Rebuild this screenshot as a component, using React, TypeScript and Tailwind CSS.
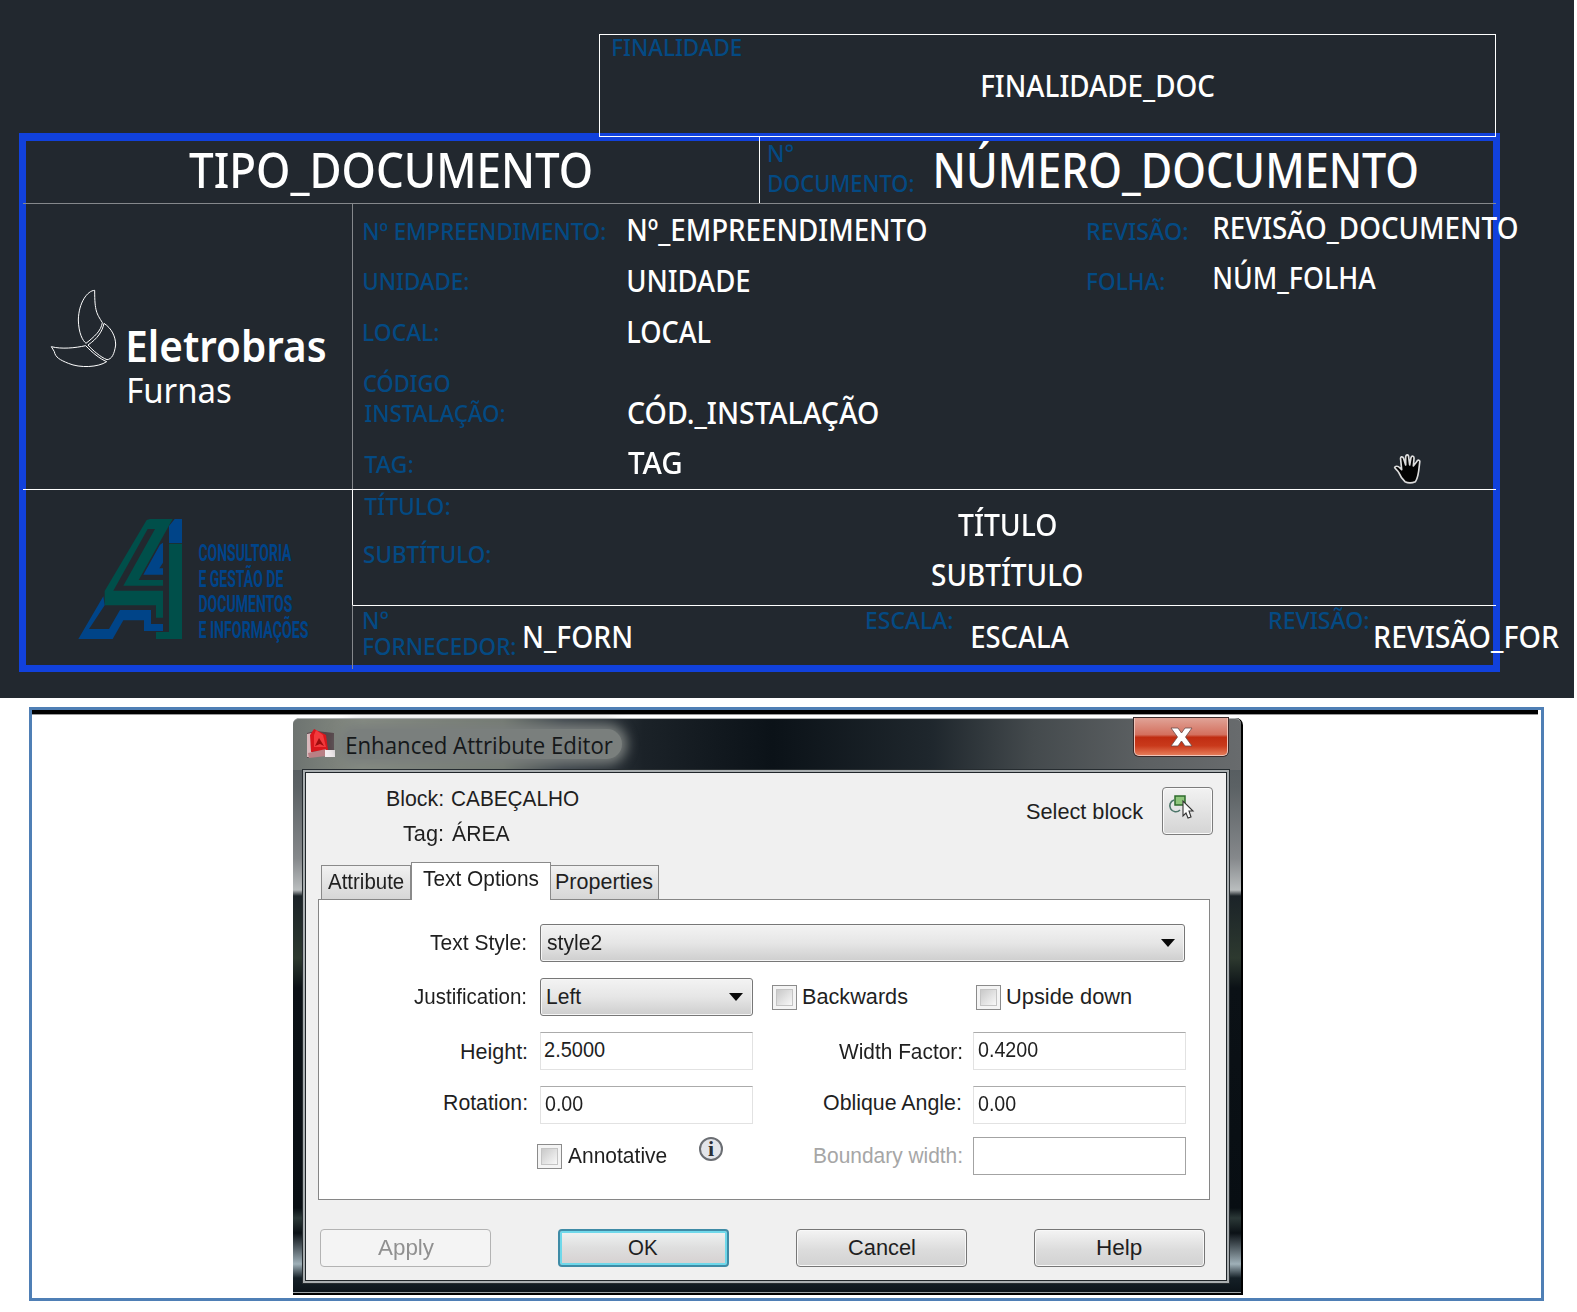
import { useLayoutEffect, useRef, type ReactNode } from "react";

/* Text stretched horizontally so that its ink fills the width of its box. */
function Fit({ children, className }: { children: string; className: string }) {
  const box = useRef<HTMLSpanElement>(null);
  const ink = useRef<HTMLSpanElement>(null);

  useLayoutEffect(() => {
    const b = box.current;
    const t = ink.current;
    if (!b || !t) return;
    const apply = () => {
      const cs = getComputedStyle(t);
      const ctx = document.createElement("canvas").getContext("2d");
      if (!ctx) return;
      ctx.font = `${cs.fontWeight} ${cs.fontSize} ${cs.fontFamily}`;
      const m = ctx.measureText(children);
      const width = m.actualBoundingBoxLeft + m.actualBoundingBoxRight;
      if (!width) return;
      const scale = b.clientWidth / width;
      t.style.transform = `translateX(${m.actualBoundingBoxLeft * scale}px) scaleX(${scale})`;
    };
    apply();
    document.fonts?.ready.then(apply);
  }, [children]);

  return (
    <span ref={box} className={`block shrink-0 whitespace-nowrap ${className}`}>
      <span ref={ink} className="inline-block origin-left align-top">
        {children}
      </span>
    </span>
  );
}

function Label({ children, className }: { children: string; className: string }) {
  return <Fit className={`h-[17px] text-[24px] leading-[17px] font-medium text-[#044a83] ${className}`}>{children}</Fit>;
}

function Value({ children, className }: { children: string; className: string }) {
  return <Fit className={`h-[22px] text-[30px] leading-[22px] font-medium text-white ${className}`}>{children}</Fit>;
}

function EletrobrasMark() {
  return (
    <svg className="h-[80px] w-[68px] shrink-0" viewBox="150 57 204 240" fill="none" stroke="#fff" strokeWidth="3">
      <path d="M284 61C262 62 236 98 235 150C236 190 248 212 258 220C283 200 303 183 307 158C290 130 284 125 284 61Z" />
      <path d="M312 160C335 175 347 200 347 225C343 253 335 268 321 269C302 262 277 240 264 225C292 206 307 185 312 160Z" />
      <path d="M154 230C185 238 225 234 257 227C277 248 299 266 320 275C295 292 240 295 205 280C180 270 166 262 163 245Z" />
    </svg>
  );
}

function ConsultoriaMark() {
  return (
    <svg className="h-[122px] w-[105px] shrink-0" viewBox="114 54 315 366">
      <g fill="#004f4a">
        <path d="M320 60L330 57H398L296 240H369V257H250L345 87H323L220 272H369V353H348V316H194V273Z" />
        <path d="M387 131H426V417H348V396H387Z" />
      </g>
      <g fill="#004488">
        <path d="M387 129V78L404 57H426V129Z" />
        <path d="M369 128V188L358 205H369V224H310L360 134Z" />
        <path d="M190 289L194 316L147 387H207L240 330H333V372H369V393H312V361H250L218 417H115Z" />
      </g>
    </svg>
  );
}

function HandCursor() {
  return (
    <svg className="absolute top-[453px] left-[1393px] h-[32px] w-[30px]" viewBox="24 24 90 96">
      <path
        d="M60 110C52 102 45 92 41 82C37 75 31 72 29 68C30 62 40 63 44 68L50 74L47 44C45 34 53 33 56 41L62 60V36C63 27 71 28 71 37L74 60L78 38C81 30 88 33 87 41L85 63L95 50C99 42 106 45 104 53L101 78C99 92 97 102 91 110C82 114 68 114 60 110Z"
        fill="#020202"
        stroke="#dcdcdc"
        strokeWidth="5"
        strokeLinejoin="round"
      />
    </svg>
  );
}

function TitleBlock() {
  return (
    <div className="relative -mt-[4px] ml-[19px] h-[539px] w-[1481px]">
      <div className="absolute inset-0 border-[7px] border-t-8 border-[#1141dc]" />
      <div className="relative flex w-[1477px] flex-col pt-1 pl-1">
        <div className="flex h-[66px] w-full">
          <div className="w-[736px] shrink-0 pt-[15px] pl-[166px]">
            <Fit className="h-[35px] w-[402px] text-[49px] leading-[35px] font-medium text-white">TIPO_DOCUMENTO</Fit>
          </div>
          <div className="flex flex-1 border-l border-white pl-[9px]">
            <div className="flex w-[167px] shrink-0 flex-col gap-[13px] pt-[7px]">
              <Label className="w-[25px]">N°</Label>
              <Label className="w-[144px]">DOCUMENTO:</Label>
            </div>
            <Fit className="mt-[15px] h-[35px] w-[481px] text-[49px] leading-[35px] font-medium text-white">
              NÚMERO_DOCUMENTO
            </Fit>
          </div>
        </div>

        <div className="flex h-[286px] w-[1473px] border-t border-[#85888c]">
          <div className="flex w-[329px] shrink-0 pt-[85px] pl-[27px]">
            <EletrobrasMark />
            <div className="flex flex-col pt-[40px] pl-[11px]">
              <Fit className="h-[32px] w-[196px] text-[44px] leading-[32px] font-semibold text-white">Eletrobras</Fit>
              <Fit className="mt-[16px] h-[26px] w-[102px] text-[35px] leading-[26px] text-white">Furnas</Fit>
            </div>
          </div>
          <div className="flex w-[1144px] shrink-0 border-l border-[#85888c] pl-[11px]">
            <div className="flex w-[264px] shrink-0 flex-col pt-[18px]">
              <Label className="w-[241px]">Nº EMPREENDIMENTO:</Label>
              <Label className="mt-[33px] w-[104px]">UNIDADE:</Label>
              <Label className="mt-[34px] w-[74px]">LOCAL:</Label>
              <Label className="mt-[34px] w-[86px]">CÓDIGO</Label>
              <Label className="mt-[13px] w-[140px]">INSTALAÇÃO:</Label>
              <Label className="mt-[34px] w-[48px]">TAG:</Label>
            </div>
            <div className="flex w-[460px] shrink-0 flex-col pt-[15px]">
              <Value className="w-[298px]">Nº_EMPREENDIMENTO</Value>
              <Value className="mt-[29px] w-[121px]">UNIDADE</Value>
              <Value className="mt-[29px] w-[83px]">LOCAL</Value>
              <Value className="mt-[59px] w-[250px]">CÓD._INSTALAÇÃO</Value>
              <Value className="mt-[28px] w-[53px]">TAG</Value>
            </div>
            <div className="flex w-[126px] shrink-0 flex-col pt-[18px]">
              <Label className="w-[99px]">REVISÃO:</Label>
              <Label className="mt-[33px] w-[76px]">FOLHA:</Label>
            </div>
            <div className="flex flex-col pt-[13px]">
              <Value className="w-[303px]">REVISÃO_DOCUMENTO</Value>
              <Value className="mt-[28px] w-[162px]">NÚM_FOLHA</Value>
            </div>
          </div>
        </div>

        <div className="flex h-[180px] w-[1473px] border-t border-white">
          <div className="flex w-[329px] shrink-0 pt-[28px] pl-[55px]">
            <ConsultoriaMark />
            <div className="flex flex-col gap-[8px] pt-[26px] pl-[16px] font-['Roboto'] text-[#00448a]">
              <Fit className="h-[18px] w-[93px] text-[24px] leading-[18px] font-bold">CONSULTORIA</Fit>
              <Fit className="h-[18px] w-[84px] text-[24px] leading-[18px] font-bold">E GESTÃO DE</Fit>
              <Fit className="h-[17px] w-[93px] text-[24px] leading-[17px] font-bold">DOCUMENTOS</Fit>
              <Fit className="h-[18px] w-[109px] text-[24px] leading-[18px] font-bold">E INFORMAÇÕES</Fit>
            </div>
          </div>
          <div className="flex w-[1144px] shrink-0 flex-col">
            <div className="flex h-[115px] border-l border-white pl-[11px]">
              <div className="flex w-[568px] shrink-0 flex-col gap-[31px] pt-[7px]">
                <Label className="w-[85px]">TÍTULO:</Label>
                <Label className="w-[126px]">SUBTÍTULO:</Label>
              </div>
              <div className="flex w-[150px] flex-col items-center gap-[28px] pt-[24px]">
                <Value className="w-[98px]">TÍTULO</Value>
                <Value className="w-[150px]">SUBTÍTULO</Value>
              </div>
            </div>
            <div className="flex h-[64px] border-t border-l border-t-white border-l-[#85888c] pl-[11px]">
              <div className="flex w-[160px] shrink-0 flex-col gap-[9px] pt-[5px]">
                <Label className="w-[25px]">N°</Label>
                <Label className="w-[151px]">FORNECEDOR:</Label>
              </div>
              <Value className="mt-[20px] w-[107px]">N_FORN</Value>
              <Label className="mt-[5px] ml-[236px] w-[85px]">ESCALA:</Label>
              <Value className="mt-[20px] ml-[20px] w-[97px]">ESCALA</Value>
              <Label className="mt-[5px] ml-[201px] w-[98px]">REVISÃO:</Label>
              <Value className="mt-[20px] ml-[7px] w-[184px]">REVISÃO_FOR</Value>
            </div>
          </div>
        </div>
      </div>
    </div>
  );
}

function CadSheet() {
  return (
    <section className="relative h-[698px] w-[1574px] overflow-hidden bg-[#22282f] pt-[34px] font-['Noto_Sans',sans-serif]">
      <div className="relative z-10 ml-[599px] flex h-[103px] w-[897px] border border-white pl-[12px]">
        <Label className="mt-[3px] ml-px w-[128px]">FINALIDADE</Label>
        <Value className="mt-[40px] ml-[241px] w-[233px]">FINALIDADE_DOC</Value>
      </div>
      <TitleBlock />
      <HandCursor />
    </section>
  );
}

function Ui({ children, className }: { children: string; className: string }) {
  return <Fit className={`h-[16px] text-[22px] leading-[16px] ${className}`}>{children}</Fit>;
}

function Caret() {
  return <span className="h-[8px] w-[14px] bg-[#0a0a0a] [clip-path:polygon(0_0,100%_0,50%_100%)]" />;
}

function Select({ children, className }: { children: ReactNode; className: string }) {
  return (
    <div
      className={`flex h-[38px] shrink-0 items-center justify-between rounded-[3px] border border-[#777] bg-linear-to-b from-[#f3f3f3] via-[#e6e6e6] to-[#cecece] shadow-[inset_0_0_0_1px_#f6f6f6] ${className}`}
    >
      {children}
      <Caret />
    </div>
  );
}

function Field({ children, className }: { children?: ReactNode; className: string }) {
  return <div className={`flex h-[38px] w-[213px] shrink-0 border bg-white pl-[4px] ${className}`}>{children}</div>;
}

const softField = "border-[#e2e2e2] border-t-[#ababab] pt-[9px]";

function Checkbox() {
  return (
    <span className="flex size-[25px] shrink-0 items-center justify-center border border-[#8b8b8b] bg-[#f4f4f4]">
      <span className="size-[17px] border border-[#c4c4c4] bg-linear-to-br from-[#c9c9c9] to-[#f8f8f8]" />
    </span>
  );
}

function RowLabel({ children, className }: { children: ReactNode; className: string }) {
  return <div className={`flex shrink-0 justify-end ${className}`}>{children}</div>;
}

function TextOptions() {
  return (
    <div className="flex h-[301px] w-[892px] flex-col border border-[#868686] bg-white pt-[24px]">
      <div className="flex h-[38px] items-center">
        <RowLabel className="w-[207px]"><Ui className="w-[96px]">Text Style:</Ui></RowLabel>
        <Select className="ml-[14px] w-[645px] pr-[9px] pl-[6px]"><Ui className="w-[55px]">style2</Ui></Select>
      </div>
      <div className="mt-[16px] flex h-[38px] items-center">
        <RowLabel className="w-[207px]"><Ui className="w-[112px]">Justification:</Ui></RowLabel>
        <Select className="ml-[14px] w-[213px] pr-[9px] pl-[6px]"><Ui className="w-[34px]">Left</Ui></Select>
        <div className="ml-[19px] flex w-[204px] items-center gap-[6px]">
          <Checkbox />
          <Ui className="w-[105px]">Backwards</Ui>
        </div>
        <div className="flex items-center gap-[6px]">
          <Checkbox />
          <Ui className="w-[124px]">Upside down</Ui>
        </div>
      </div>
      <div className="mt-[16px] flex h-[38px] items-center">
        <RowLabel className="w-[208px]"><Ui className="mt-[2px] w-[66px]">Height:</Ui></RowLabel>
        <Field className={`ml-[13px] ${softField}`}><Ui className="w-[60px]">2.5000</Ui></Field>
        <RowLabel className="w-[209px]"><Ui className="mt-[2px] w-[123px]">Width Factor:</Ui></RowLabel>
        <Field className={`ml-[11px] ${softField}`}><Ui className="w-[60px]">0.4200</Ui></Field>
      </div>
      <div className="mt-[16px] flex h-[38px] items-center">
        <RowLabel className="w-[208px]"><Ui className="-mt-[4px] w-[83px]">Rotation:</Ui></RowLabel>
        <Field className={`ml-[13px] ${softField}`}><Ui className="w-[38px]">0.00</Ui></Field>
        <RowLabel className="w-[209px]"><Ui className="-mt-[4px] w-[138px]">Oblique Angle:</Ui></RowLabel>
        <Field className={`ml-[11px] ${softField}`}><Ui className="w-[38px]">0.00</Ui></Field>
      </div>
      <div className="mt-[13px] flex h-[38px] items-center">
        <div className="ml-[218px] flex w-[162px] items-center gap-[6px]">
          <Checkbox />
          <Ui className="w-[99px]">Annotative</Ui>
        </div>
        <span className="-mt-[14px] flex size-[24px] items-center justify-center rounded-full border-2 border-[#6a6d72] bg-[#e3e5ea] font-['Liberation_Serif'] text-[22px] leading-none font-bold text-[#2c2f36]">
          i
        </span>
        <RowLabel className="w-[239px]"><Ui className="w-[148px] text-[#a6a6a6]">Boundary width:</Ui></RowLabel>
        <Field className="ml-[11px] border-[#a3a3a3]" />
      </div>
    </div>
  );
}

function Tab({ children, className }: { children: ReactNode; className: string }) {
  return (
    <div className={`flex h-[34px] justify-center border border-b-0 border-[#8a8a8a] bg-linear-to-b from-[#f1f1f1] to-[#d6d6d6] pt-[8px] ${className}`}>
      {children}
    </div>
  );
}

function DialogButton({ children, className }: { children: ReactNode; className: string }) {
  return <div className={`flex h-[38px] w-[171px] items-center justify-center rounded-[4px] ${className}`}>{children}</div>;
}

const plainButton =
  "border border-[#767676] bg-linear-to-b from-[#f4f4f4] from-0% via-[#dcdcdc] via-55% to-[#d2d2d2] shadow-[inset_0_0_0_1px_#f8f8f8]";

function AppIcon() {
  return (
    <svg className="h-[30px] w-[30px] shrink-0" viewBox="0 0 30 30">
      <defs>
        <filter id="soft" x="-10%" y="-10%" width="120%" height="120%">
          <feGaussianBlur stdDeviation="0.7" />
        </filter>
      </defs>
      <g filter="url(#soft)">
        <path d="M1 4L10 2L28 4V22H20L1 29Z" fill="#55454a" />
        <path d="M1 5L6 4V28H1Z" fill="#d9b9bc" />
        <path d="M4 6L8 0L20 6L22 21L5 23Z" fill="#d9161c" />
        <path d="M8 6L10 1L17 6L20 18H8Z" fill="#f23a3c" />
        <path d="M9 17L13 9L18 17L14 15Z" fill="#9d090e" />
        <path d="M2 24L20 20V27L3 29Z" fill="#b98085" />
        <path d="M19 21H29V28H19Z" fill="#f4eef0" />
      </g>
    </svg>
  );
}

function PickIcon() {
  return (
    <svg className="h-[26px] w-[28px]" viewBox="0 0 28 26">
      <path d="M7 6A6 6 0 1 0 13 16" fill="none" stroke="#4c7569" strokeWidth="1.6" />
      <path d="M8 2H18V11H8Z" fill="#8fc67c" stroke="#2e6b2c" strokeWidth="1.5" />
      <path d="M16 7V22L19 19L21 24L24 23L22 17H26Z" fill="#fafafa" stroke="#333" strokeWidth="1.1" />
    </svg>
  );
}

function AttributeDialog() {
  return (
    <div className="relative ml-[261px] flex h-[577px] w-[950px] flex-col rounded-t-[7px] border-r-2 border-b-2 border-black bg-[linear-gradient(180deg,#4b5256_0px,#5c6265_70px,#85888b_140px,#b9bdbe_172px,#1b2328_178px,#2d392f_240px,#0b1116_270px,#080e13_490px,#2b3837_500px,#0b1116_515px,#9fb0b8_546px,#152027_560px,#0a1117_577px)]">
      <div className="flex h-[52px] shrink-0 rounded-t-[6px] border-t border-[#aeb2b3] bg-[linear-gradient(90deg,#6d7370_0px,#878d83_70px,#747b72_210px,#3c444b_270px,#1b2228_350px,#0b1218_480px,#1f272d_640px,#444a4d_740px,#5c6062_850px,#686b6d_948px)] pl-[13px]">
        <div className="mt-[10px]"><AppIcon /></div>
        <div className="mt-[10px] ml-[6px] h-[30px] w-[280px] shrink-0 rounded-full bg-[#7a7f7d] pt-[7px] pl-[5px] shadow-[0_0_12px_5px_#7a7f7d]">
          <Fit className="h-[17px] w-[266px] font-['Open_Sans'] text-[24px] leading-[17px] text-[#15181a]">
            Enhanced Attribute Editor
          </Fit>
        </div>
        <div className="-mt-px ml-[512px] flex h-[38px] w-[94px] items-center justify-center rounded-b-[5px] border border-t-0 border-[#f0c3b8] bg-[linear-gradient(180deg,#e0a397_0%,#d4705e_45%,#c02d12_52%,#c9391b_75%,#e57b58_100%)] shadow-[0_0_0_1px_#3a2a2a]">
          <svg className="h-[20px] w-[23px]" viewBox="0 0 23 20">
            <path
              d="M1 1H8L11.5 6L15 1H22L15.5 10L22 19H15L11.5 14L8 19H1L7.5 10Z"
              fill="#fff"
              stroke="#6b4a48"
              strokeWidth="0.8"
            />
          </svg>
        </div>
      </div>

      <div className="ml-[10px] flex h-[513px] w-[926px] shrink-0 flex-col border-2 border-[#a9aeb0] shadow-[0_0_0_1px_#262c30]">
        <div className="flex h-full flex-col border border-[#20262a] bg-[#f0f0f0] font-['Liberation_Sans'] text-[#1f1f1f]">
          <div className="flex h-[90px] shrink-0">
            <div className="flex w-[137px] flex-col items-end gap-[19px] pt-[18px]">
              <Ui className="w-[56px]">Block:</Ui>
              <Ui className="w-[40px]">Tag:</Ui>
            </div>
            <div className="flex w-[584px] flex-col gap-[19px] pt-[18px] pl-[9px]">
              <Ui className="w-[127px]">CABEÇALHO</Ui>
              <Ui className="w-[58px]">ÁREA</Ui>
            </div>
            <Ui className="mt-[31px] w-[117px]">Select block</Ui>
            <div className="mt-[14px] ml-[18px] h-[48px] w-[51px] shrink-0 rounded-[4px] border border-[#7c7c7c] bg-linear-to-b from-[#f2f2f2] to-[#d4d4d4] pt-[6px] pl-[4px] shadow-[inset_0_0_0_1px_#fafafa]">
              <PickIcon />
            </div>
          </div>
          <div className="flex h-[36px] shrink-0 items-end pl-[15px]">
            <Tab className="w-[90px]"><Ui className="w-[76px]">Attribute</Ui></Tab>
            <div className="relative z-10 -mb-px flex h-[38px] w-[140px] justify-center border border-b-0 border-[#8a8a8a] bg-white pt-[8px]">
              <Ui className="w-[116px]">Text Options</Ui>
            </div>
            <Tab className="w-[108px] border-l-0"><Ui className="w-[97px]">Properties</Ui></Tab>
          </div>
          <div className="pl-[12px]">
            <TextOptions />
          </div>
          <div className="mt-[29px] flex gap-[67px] pl-[14px]">
            <DialogButton className="border border-[#b3b3b3] bg-[#f4f4f4]">
              <Ui className="w-[56px] text-[#909090]">Apply</Ui>
            </DialogButton>
            <DialogButton className="border-2 border-[#3f8ba6] bg-linear-to-b from-[#f0f3f3] via-[#dedede] to-[#d5d0d0] shadow-[inset_0_0_0_2px_#6fd8ea]">
              <Ui className="w-[29px]">OK</Ui>
            </DialogButton>
            <DialogButton className={plainButton}><Ui className="w-[66px]">Cancel</Ui></DialogButton>
            <DialogButton className={plainButton}><Ui className="w-[45px]">Help</Ui></DialogButton>
          </div>
        </div>
      </div>
      <div className="mt-auto h-px w-full bg-[#9da3a6]" />
    </div>
  );
}

export default function App() {
  return (
    <main className="flex h-[1312px] w-[1577px] flex-col overflow-hidden bg-white">
      <CadSheet />
      <section className="mt-[9px] ml-[29px] h-[594px] w-[1515px] border-[3px] border-[#4f7fb5]">
        <div className="mb-[3px] h-[5px] w-[1506px] border-b border-[#9a9a9a] bg-black" />
        <AttributeDialog />
      </section>
    </main>
  );
}
